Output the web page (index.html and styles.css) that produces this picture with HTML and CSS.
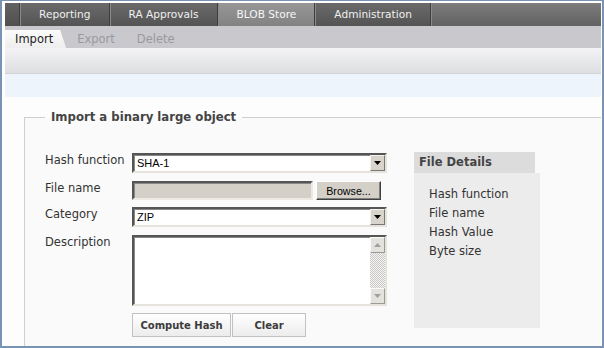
FILE: index.html
```html
<!DOCTYPE html>
<html>
<head>
<meta charset="utf-8">
<link rel="stylesheet" href="styles.css">
</head>
<body>
<div class="frame">
  <nav class="topnav">
    <span class="lead"></span>
    <a class="tab">Reporting</a>
    <a class="tab">RA Approvals</a>
    <a class="tab active">BLOB Store</a>
    <a class="tab">Administration</a>
    <span class="rest"></span>
  </nav>
  <div class="subnav">
    <a class="sub active">Import</a>
    <a class="sub">Export</a>
    <a class="sub">Delete</a>
  </div>
  <div class="toolbar"></div>
  <div class="infobar"></div>
  <main class="content">
    <fieldset class="box">
      <legend class="legend">Import a binary large object</legend>
      <div class="layout">
        <div class="form">
          <label class="lbl">Hash function</label>
          <div class="combo">
            <span class="combo-text">SHA-1</span>
            <span class="drop"><svg width="7" height="4" viewBox="0 0 7 4"><path d="M0 0h7L3.5 4z" fill="#000"/></svg></span>
          </div>

          <label class="lbl">File name</label>
          <div class="filerow">
            <div class="filebox"></div>
            <div class="browse">Browse...</div>
          </div>

          <label class="lbl">Category</label>
          <div class="combo">
            <span class="combo-text">ZIP</span>
            <span class="drop"><svg width="7" height="4" viewBox="0 0 7 4"><path d="M0 0h7L3.5 4z" fill="#000"/></svg></span>
          </div>

          <label class="lbl">Description</label>
          <div class="textarea">
            <div class="ta-text"></div>
            <div class="vscroll">
              <span class="sbtn"><svg width="7" height="4" viewBox="0 0 7 4"><path d="M0 4h7L3.5 0z" fill="#a0a0a0"/></svg></span>
              <span class="track"></span>
              <span class="sbtn"><svg width="7" height="4" viewBox="0 0 7 4"><path d="M0 0h7L3.5 4z" fill="#a0a0a0"/></svg></span>
            </div>
          </div>

          <span></span>
          <div class="actions">
            <button class="btn compute">Compute Hash</button>
            <button class="btn clear">Clear</button>
          </div>
        </div>
        <aside class="details">
          <div class="details-head">File Details</div>
          <ul class="details-body">
            <li>Hash function</li>
            <li>File name</li>
            <li>Hash Value</li>
            <li>Byte size</li>
          </ul>
        </aside>
      </div>
    </fieldset>
  </main>
</div>
</body>
</html>
```

FILE: styles.css
```css
* { box-sizing: border-box; }
html, body { margin: 0; padding: 0; background: #fff; }
body { font-family: "DejaVu Sans", Verdana, sans-serif; }

.frame {
  width: 604px;
  height: 348px;
  border-style: solid;
  border-color: #7893b3;
  border-width: 1px 2px 2px 2px;
  padding: 2px 1px 0 3px;
  display: flex;
  flex-direction: column;
  overflow: hidden;
  background: #fff;
}

/* top navigation */
.topnav {
  height: 23px;
  flex: none;
  display: flex;
  background: linear-gradient(#7c7c7c, #626262);
}
.topnav .lead {
  width: 15px;
  background: linear-gradient(#626262, #4f4f4f);
  border-right: 1px solid #3e3e3e;
}
.topnav .tab {
  padding: 0 18px 0 18px;
  font-size: 10.6px;
  line-height: 23px;
  color: #f0f0f0;
  background: linear-gradient(#6a6a6a, #545454);
  border-left: 1px solid #8a8a8a;
  border-right: 1px solid #3e3e3e;
  white-space: nowrap;
}
.topnav .tab.active {
  background: linear-gradient(#979797, #828282);
  color: #f6f6f6;
}
.topnav .rest { flex: 1; border-left: 1px solid #8a8a8a; }

/* sub navigation */
.subnav {
  height: 22px;
  flex: none;
  display: flex;
  align-items: flex-end;
  background: #c9c8cd;
}
.sub {
  font-size: 11.5px;
  line-height: 18px;
  height: 18px;
  padding: 0 11px 0 11px;
  color: #9a9a9c;
}
.sub.active {
  color: #1c1c1c;
  padding: 0 13px 0 10px;
  background: linear-gradient(#fbfbfb, #eeeeee);
  clip-path: polygon(0 0, calc(100% - 6px) 0, 100% 100%, 0 100%);
}

.toolbar {
  height: 26px;
  flex: none;
  background: linear-gradient(#f3f3f5, #dedfe1);
  border-bottom: 1px solid #d3d4d6;
}
.infobar {
  height: 23px;
  flex: none;
  background: #eef4fb;
}

/* content */
.content {
  flex: 1;
  padding: 0 0 0 19px;
  overflow: hidden;
  background: #fdfdfd;
}
.box {
  margin: 13px -40px 0 0;
  padding: 29px 20px 20px 20px;
  border: 1px solid #cfcfcf;
  border-bottom: none;
  background: #fafafa;
  min-height: 260px;
}
.legend {
  padding: 0 6px;
  font-size: 11.7px;
  line-height: 14px;
  font-weight: bold;
  color: #444;
}

.layout {
  display: flex;
  gap: 27px;
  align-items: flex-start;
}

.form {
  display: grid;
  grid-template-columns: 87px 255px;
  grid-template-rows: 21px 19px 21px 71px 24px;
  row-gap: 7px;
}
.lbl {
  font-size: 11.5px;
  line-height: 14px;
  color: #333;
}

.combo {
  height: 20px;
  display: flex;
  align-items: center;
  background: #fff;
  border: 2px solid;
  border-color: #555 #e6e3dc #e6e3dc #555;
  box-shadow: inset 1px 1px 0 #888;
}
.combo-text {
  flex: 1;
  padding-left: 3px;
  font-family: "Liberation Sans", Arial, sans-serif;
  font-size: 11px;
  color: #000;
}
.drop {
  width: 15px;
  height: 16px;
  display: flex;
  align-items: center;
  justify-content: center;
  background: #d8d4cc;
  border: 1px solid;
  border-color: #f4f2ee #7a7874 #7a7874 #f4f2ee;
}

.filerow {
  display: flex;
  gap: 3px;
  height: 19px;
}
.filebox {
  width: 181px;
  background: #d4d0c8;
  border: 2px solid;
  border-color: #555 #ece9e3 #ece9e3 #555;
  box-shadow: inset 1px 1px 0 #888;
}
.browse {
  width: 65px;
  display: flex;
  align-items: center;
  justify-content: center;
  font-family: "Liberation Sans", Arial, sans-serif;
  font-size: 10.7px;
  color: #000;
  background: #d4d0c8;
  border: 1px solid;
  border-color: #fff #404040 #404040 #fff;
  box-shadow: inset -1px -1px 0 #808080;
}

.textarea {
  height: 71px;
  display: flex;
  background: #fff;
  border: 2px solid;
  border-color: #555 #e6e3dc #e6e3dc #555;
  box-shadow: inset 1px 1px 0 #888;
}
.ta-text { flex: 1; }
.vscroll {
  width: 15px;
  display: flex;
  flex-direction: column;
}
.sbtn {
  height: 16px;
  flex: none;
  display: flex;
  align-items: center;
  justify-content: center;
  background: #e4e2dd;
  border: 1px solid;
  border-color: #fafafa #9c9a96 #9c9a96 #fafafa;
}
.track {
  flex: 1;
  background: repeating-conic-gradient(#c8c6c2 0 25%, #f6f6f6 0 50%) 0 0 / 2px 2px;
}

.actions {
  display: flex;
  gap: 1px;
}
.btn {
  height: 24px;
  margin: 0;
  padding: 0;
  font-family: "DejaVu Sans", Verdana, sans-serif;
  font-size: 10px;
  font-weight: bold;
  color: #3c3c3c;
  background: linear-gradient(#ffffff, #ececec);
  border: 1px solid #c2c2c2;
}
.btn.compute { width: 99px; }
.btn.clear { width: 74px; }

.details {
  margin-top: -1px;
  width: 126px;
}
.details-head {
  width: 121px;
  height: 21px;
  padding-left: 5px;
  font-size: 11.5px;
  line-height: 21px;
  font-weight: bold;
  color: #444;
  background: #dcdcdc;
}
.details-body {
  margin: 0;
  list-style: none;
  height: 155px;
  padding: 12px 10px 0 15px;
  background: #ececec;
}
.details-body li {
  font-size: 11.5px;
  line-height: 19px;
  color: #333;
}
```
